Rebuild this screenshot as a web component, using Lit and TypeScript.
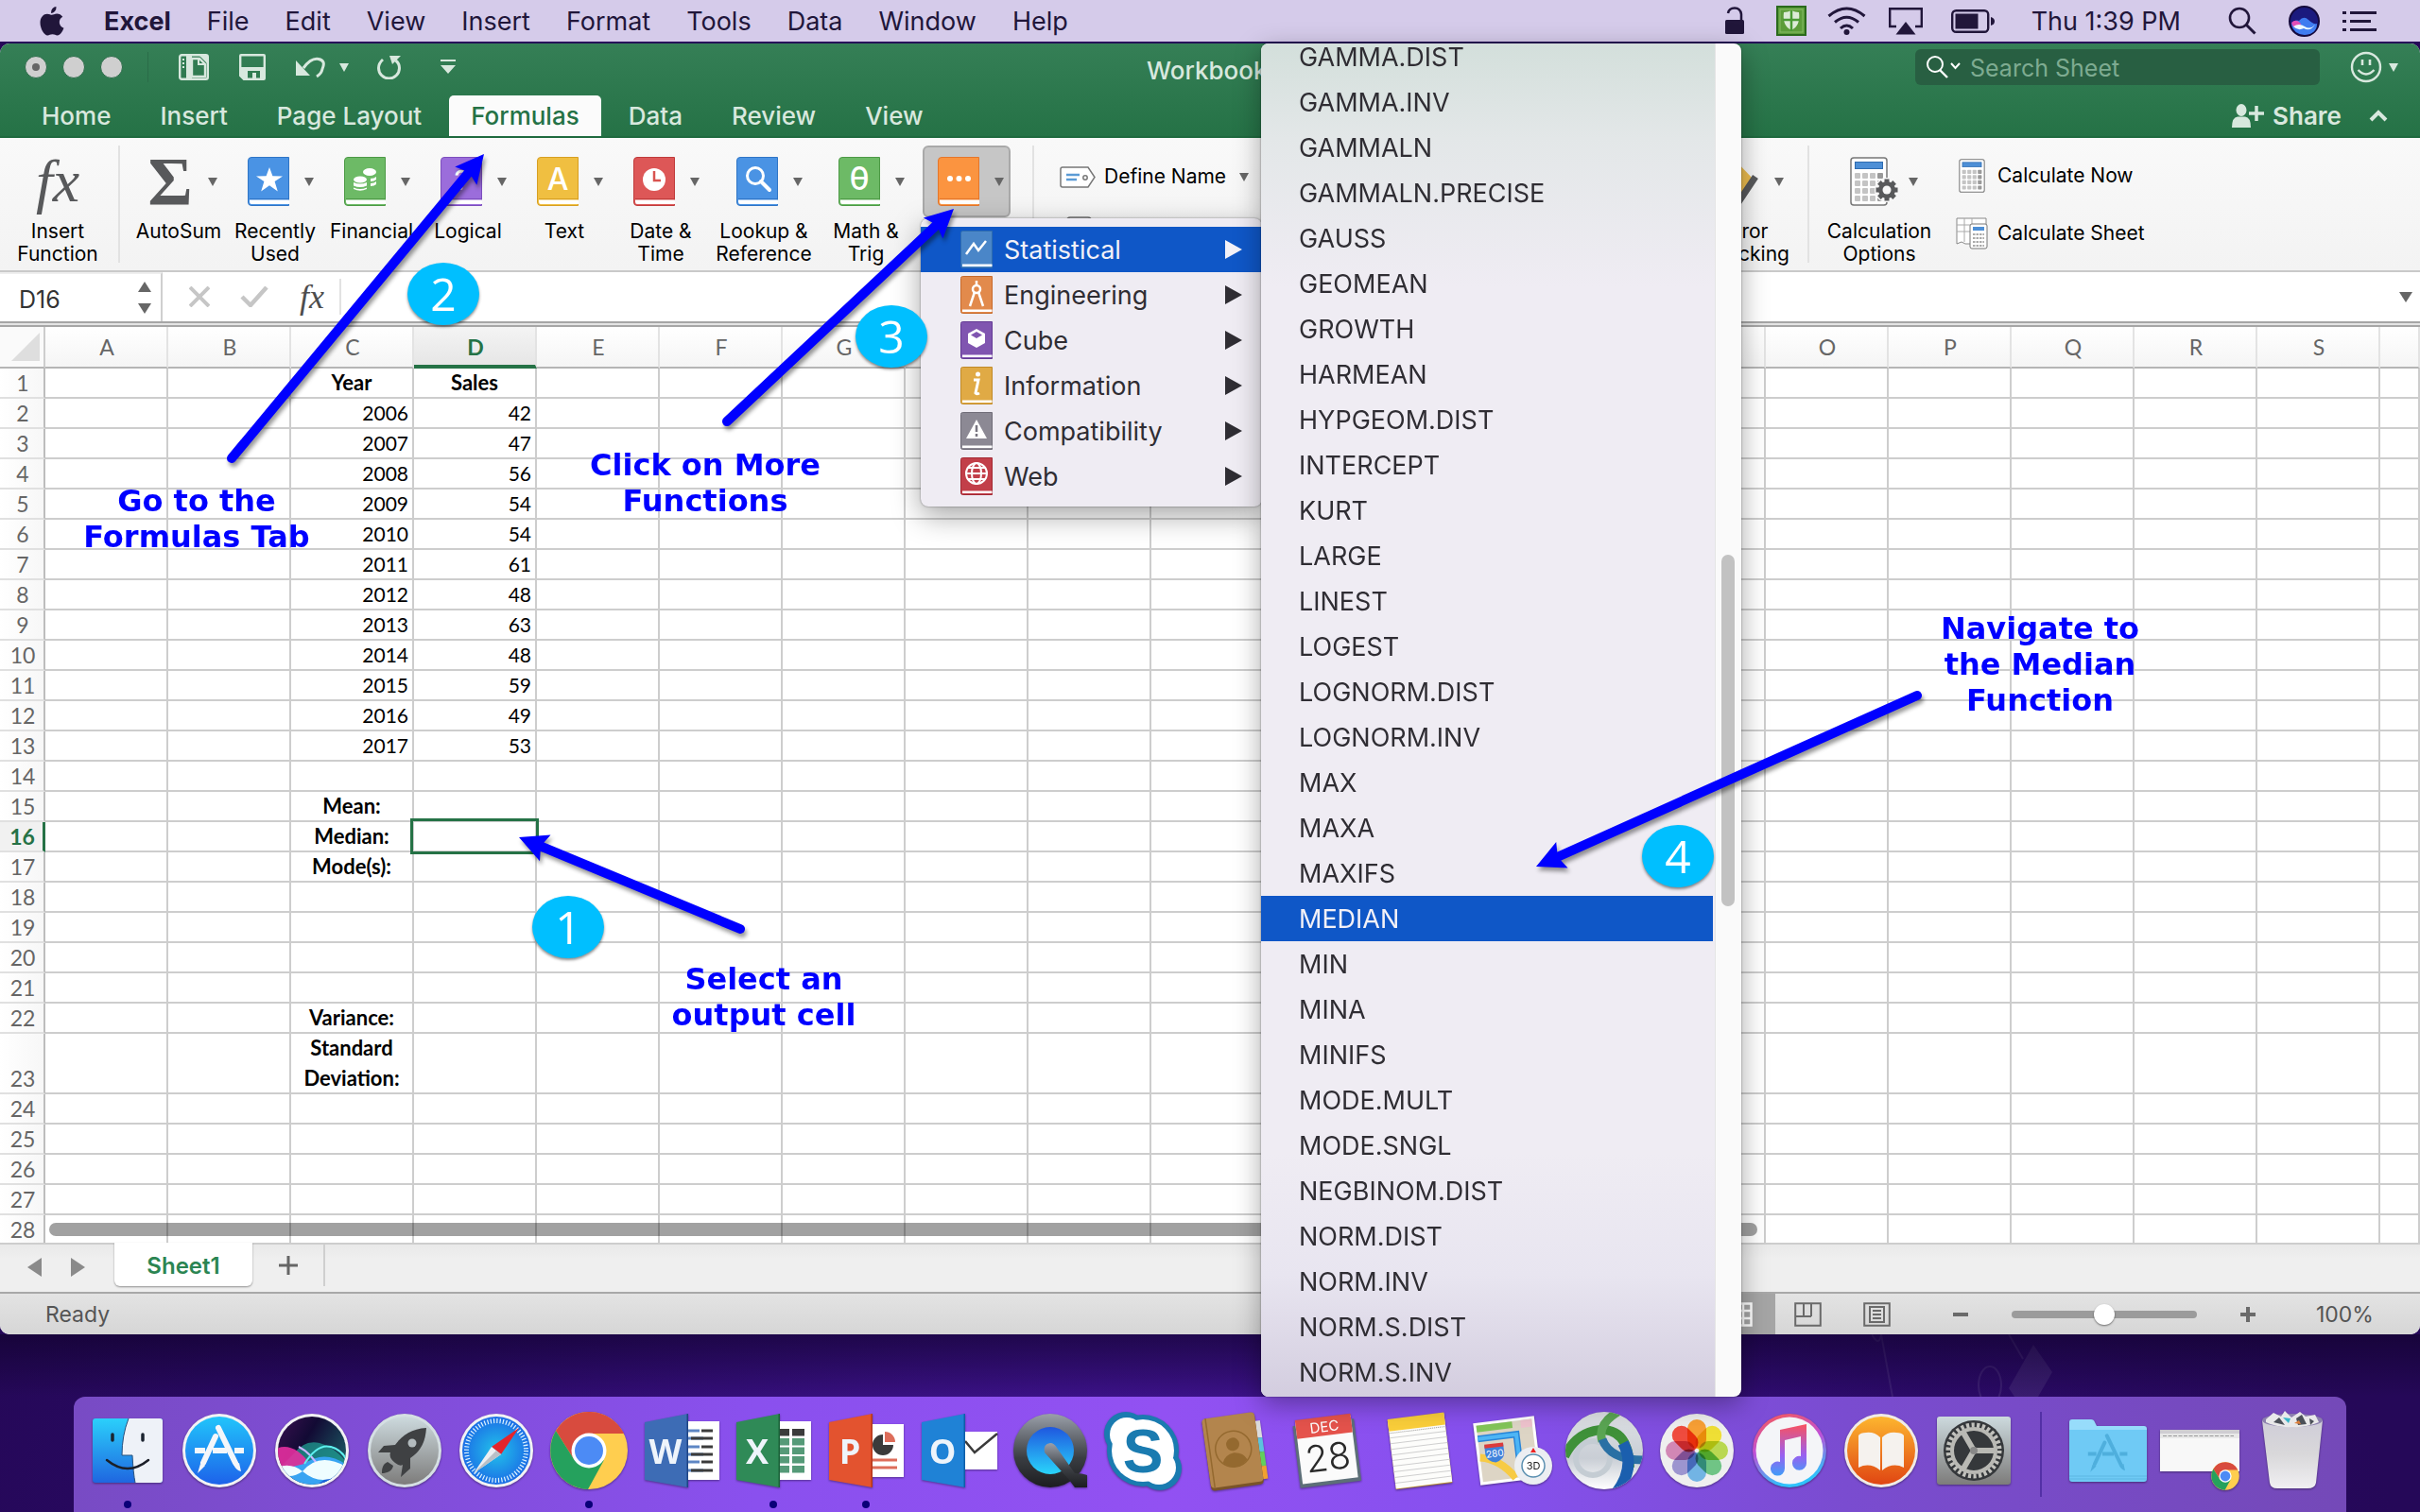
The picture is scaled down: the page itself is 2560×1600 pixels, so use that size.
import { LitElement, html, svg, css, nothing } from "lit";
import { customElement } from "lit/decorators.js";
import { classMap } from "lit/directives/class-map.js";
import { styleMap } from "lit/directives/style-map.js";

const MENUS = ["Excel", "File", "Edit", "View", "Insert", "Format", "Tools", "Data", "Window", "Help"];
const TABS = ["Home", "Insert", "Page Layout", "Formulas", "Data", "Review", "View"];
const COLUMNS = "ABCDEFGHIJKLMNOPQRST".split("");

const CELLS: Record<number, { c?: string; d?: string; head?: boolean }> = {
  1: { c: "Year", d: "Sales", head: true },
  2: { c: "2006", d: "42" },
  3: { c: "2007", d: "47" },
  4: { c: "2008", d: "56" },
  5: { c: "2009", d: "54" },
  6: { c: "2010", d: "54" },
  7: { c: "2011", d: "61" },
  8: { c: "2012", d: "48" },
  9: { c: "2013", d: "63" },
  10: { c: "2014", d: "48" },
  11: { c: "2015", d: "59" },
  12: { c: "2016", d: "49" },
  13: { c: "2017", d: "53" },
  15: { c: "Mean:", head: true },
  16: { c: "Median:", head: true },
  17: { c: "Mode(s):", head: true },
  22: { c: "Variance:", head: true },
  23: { c: "Standard Deviation:", head: true },
};

const FUNCTIONS = [
  "GAMMA.DIST", "GAMMA.INV", "GAMMALN", "GAMMALN.PRECISE", "GAUSS", "GEOMEAN", "GROWTH", "HARMEAN",
  "HYPGEOM.DIST", "INTERCEPT", "KURT", "LARGE", "LINEST", "LOGEST", "LOGNORM.DIST", "LOGNORM.INV",
  "MAX", "MAXA", "MAXIFS", "MEDIAN", "MIN", "MINA", "MINIFS", "MODE.MULT", "MODE.SNGL",
  "NEGBINOM.DIST", "NORM.DIST", "NORM.INV", "NORM.S.DIST", "NORM.S.INV",
];

/* ---------- ribbon books ---------- */

const book = (fill: string, edge: string, glyph: unknown) => html`
  <svg class="book" viewBox="0 0 44 52" aria-hidden="true">
    <path d="M4 .5H43.500V51.500H4A3.500 3.500 0 0 1 .5 48V4A3.500 3.500 0 0 1 4 .5Z" fill=${fill} stroke=${edge} />
    <path d="M2 45.500H44V50H4Q2 50 2 47.500Z" fill="#fff" />
    <path d="M2 44.500H43" stroke=${edge} />
    ${glyph}
  </svg>`;

const starGlyph = svg`<path d="M23 11l3.400 9.200 10.600.3-8.400 5.600 3.200 10.400L23 30.200l-8.800 6.300 3.200-10.400L9 20.500l10.600-.3z" fill="#fff"/>`;
const coinsGlyph = svg`<g fill="#fff"><ellipse cx="27" cy="16" rx="7" ry="4"/><path d="M28 23q4 0 6-2v3q-2 2-6 2zM28 28q4 0 6-2v3q-2 2-6 2z"/><ellipse cx="17" cy="24" rx="7" ry="3.500"/><path d="M10 27q7 3 14 0v3.500q-7 3-14 0zM10 32.500q7 3 14 0V34q-7 3.500-14 0z"/></g>`;
const letterGlyph = (t: string, size = 28) =>
  svg`<text x="22" y="35" font-size=${size} text-anchor="middle" fill="#fff" font-family="Inter, sans-serif" font-weight="500">${t}</text>`;
const clockGlyph = svg`<circle cx="22" cy="24" r="12" fill="#fff"/><path d="M22 15v10h7" fill="none" stroke="#d9534f" stroke-width="2.500"/>`;
const lensGlyph = svg`<circle cx="20" cy="20" r="8.500" fill="none" stroke="#fff" stroke-width="3"/><path d="M26 26l9 9" stroke="#fff" stroke-width="4" stroke-linecap="round"/>`;
const dotsGlyph = svg`<g fill="#fff"><circle cx="13" cy="23" r="3"/><circle cx="22.500" cy="23" r="3"/><circle cx="32" cy="23" r="3"/></g>`;

const BOOKS = [
  { label: "Recently Used", fill: "#4a93e4", edge: "#2f75c6", glyph: starGlyph, size: "" },
  { label: "Financial", fill: "#6dba66", edge: "#4d9a46", glyph: coinsGlyph, size: "" },
  { label: "Logical", fill: "#9b6ddb", edge: "#7c4ebd", glyph: letterGlyph("?"), size: "" },
  { label: "Text", fill: "#f0bf41", edge: "#d79f22", glyph: letterGlyph("A", 32), size: "" },
  { label: "Date & Time", fill: "#dd5757", edge: "#c03c3c", glyph: clockGlyph, size: "" },
  { label: "Lookup & Reference", fill: "#4a93e4", edge: "#2f75c6", glyph: lensGlyph, size: "wide" },
  { label: "Math & Trig", fill: "#6dba66", edge: "#4d9a46", glyph: letterGlyph("θ", 34), size: "narrow" },
];

const smallBook = (fill: string, edge: string, glyph: unknown) => html`
  <svg class="small-book" viewBox="0 0 34 40" aria-hidden="true">
    <path d="M2.500 .5H33.500V39.500H2.500A2 2 0 0 1 .5 37.500V2.500A2 2 0 0 1 2.500 .5Z" fill=${fill} stroke=${edge} />
    <path d="M2 35.500H33.500V38H2Z" fill="#fff" />
    ${glyph}
  </svg>`;

const CATEGORIES = [
  { name: "Statistical", fill: "#4a86c8", edge: "#2f6cae", glyph: svg`<path d="M6 25l8-11 5 7 8-10" fill="none" stroke="#fff" stroke-width="2.500"/>` },
  { name: "Engineering", fill: "#e28a4c", edge: "#c76a2b", glyph: svg`<g fill="none" stroke="#fff" stroke-width="2.500"><path d="M17 5v5M15 17l-5 15M19 17l5 15"/><circle cx="17" cy="14" r="4"/></g>` },
  { name: "Cube", fill: "#8055b0", edge: "#633a94", glyph: svg`<path d="M17 8l9 5v10l-9 5-9-5V13z" fill="#fff"/><path d="M17 11l6 3.500-6 3.500-6-3.500z" fill="#8055b0"/>` },
  { name: "Information", fill: "#e0aa45", edge: "#c08a28", glyph: svg`<circle cx="18.500" cy="8" r="2.500" fill="#fff"/><path d="M14 14h5l-3 14q1 1.500 4 0" fill="none" stroke="#fff" stroke-width="3"/>` },
  { name: "Compatibility", fill: "#8c8994", edge: "#6f6c77", glyph: svg`<path d="M17 8l11 20H6z" fill="#fff"/><path d="M17 14v7M17 23v3" stroke="#77747f" stroke-width="2.500"/>` },
  { name: "Web", fill: "#c23f49", edge: "#a32a34", glyph: svg`<g fill="none" stroke="#fff" stroke-width="2"><circle cx="17" cy="17" r="11"/><ellipse cx="17" cy="17" rx="5" ry="11"/><path d="M6 17h22M8 11h18M8 23h18"/></g>` },
];

const calculator = (cls: string, gear: boolean) => html`
  <svg class=${cls} viewBox=${gear ? "0 0 52 52" : "0 0 40 52"} aria-hidden="true">
    <rect x="1" y="1" width="38" height="50" rx="3" fill="#fff" stroke="#777" stroke-width="1.500" />
    <rect x="5.500" y="5.500" width="29" height="7" fill="#4d8fd6" stroke="#2f6cb0" />
    ${[0, 1, 2, 3].map((r) => [0, 1, 2, 3].map((c) => svg`<rect x=${5 + c * 8} y=${17 + r * 8} width="6" height="6" rx="1" fill=${c === 3 ? "#9a9a9a" : "#c4c4c4"}/>`))}
    ${gear
      ? svg`<circle cx="39" cy="35" r="13" fill="#f7f7f7"/><g fill="#58595b"><circle cx="39" cy="35" r="9"/>${[0, 45, 90, 135].map((a) => svg`<rect x="36.500" y="23.500" width="5" height="23" transform="rotate(${a} 39 35)"/>`)}</g><circle cx="39" cy="35" r="4.500" fill="#f7f7f7"/>`
      : nothing}
  </svg>`;

const fxGlyph = (cls: string) => html`<span class=${cls} aria-hidden="true">fx</span>`;
const caret = html`<svg class="caret" width="12" height="9" viewBox="0 0 12 9" aria-hidden="true"><path d="M1 0h10L6 9z" fill="currentColor" /></svg>`;

/* ---------- dock ---------- */

const office = (base: string, dark: string, letter: string, paper: unknown) => svg`
  ${paper}
  <path d="M3 12L49 3V81L3 73Z" fill=${base}/><path d="M47.500 3.300L49 3V81L47.500 80.700Z" fill=${dark}/>
  <text x="25" y="56" font-size="36" text-anchor="middle" fill="#eef4fb" font-family="Open Sans, sans-serif" font-weight="700">${letter}</text>`;

const chrome = (x: number, y: number, k: number) => svg`
  <g transform="translate(${x} ${y}) scale(${k})">
    <circle r="41" fill="#ffce4f"/>
    <path d="M0-18H37A41 41 0 0 0-35-21L-16 9Z" fill="#d84b3e"/>
    <path d="M-35-21A41 41 0 0 0-1 41L16 10L0 18L-16 9Z" fill="#25a15d"/>
    <circle r="18.500" fill="#fff"/><circle r="15" fill="#4c8bf5"/>
  </g>`;

const brushes = (c: string, w: number) => svg`
  <g stroke=${c} stroke-width=${w} stroke-linecap="round" fill="none"><path d="M38 27L25 55M41 18L59 55" /><path d="M16 42H27M35 42H50M58 42H68" stroke-linecap="butt"/></g>
  <path d="M22 56l5 2-8 8zM57 57l6-2 2 9q-5-1-8-7z" fill=${c}/>`;

const DOCK: { name: string; running?: boolean; art: unknown }[] = [
  {
    name: "Finder", running: true,
    art: svg`<rect x="5" y="8" width="74" height="68" rx="3" fill="url(#finderBlue)"/>
      <path d="M43 8H76a3 3 0 0 1 3 3V73a3 3 0 0 1-3 3H50Q48 66 47 47H36Q36 26 43 8Z" fill="#eef2f8"/>
      <path d="M43 8Q36 26 36 47H47Q48 66 50 76" fill="none" stroke="#27527d"/>
      <path d="M26 25v6M58 25v6" stroke="#1b2430" stroke-width="3.500" stroke-linecap="round"/>
      <path d="M20 52Q42 70 64 52" fill="none" stroke="#1b1f28" stroke-width="2.500" stroke-linecap="round"/>`,
  },
  { name: "App Store", art: svg`<circle cx="42" cy="42" r="39" fill="#f2f2f4"/><circle cx="42" cy="42" r="36" fill="url(#storeBlue)"/>${brushes("#f4f6fa", 6)}` },
  {
    name: "Siri",
    art: svg`<circle cx="42" cy="42" r="39" fill="#f2f2f4"/><circle cx="42" cy="42" r="36" fill="url(#siriDark)"/>
      <g clip-path="url(#disc36)"><path d="M22 46Q34 30 50 34T80 56V64H4Z" fill="#1fa597" opacity=".7"/><path d="M4 40Q22 32 40 56L32 64L4 60Z" fill="#e62fa0" opacity=".9"/>
      <path d="M4 62Q20 60 34 56Q56 40 80 58V84H4Z" fill="#38a4f2"/><path d="M4 68Q30 74 44 84H4Z" fill="#6f7cf0"/><path d="M40 84Q60 66 80 66V84Z" fill="#1c60d8"/>
      <path d="M28 38Q40 44 50 60" fill="none" stroke="#c9b6ff" stroke-width="2"/><path d="M34 56Q48 34 62 38T80 56" fill="none" stroke="#5ef0ee" stroke-width="2"/>
      <path d="M4 60Q20 54 32 64Q50 42 80 60Q56 84 32 64Q18 74 4 64Z" fill="#effdff"/></g>`,
  },
  {
    name: "Launchpad",
    art: svg`<circle cx="42" cy="42" r="39" fill="#d5dfe3"/><circle cx="42" cy="42" r="36" fill="url(#steel)"/>
      <path d="M65 18C50 19 40 25 32 36L20 37L14 44L27 44Q25 50 32 55Q37 59 40 57L38 70L48 61L48 50C60 42 64 32 65 18Z" fill="#3f4143"/>
      <circle cx="50" cy="34" r="4.500" fill="#b3bbbe"/><path d="M24 54C18 57 18 62 18 66C23 66 29 64 30 58Z" fill="#3f4143"/>`,
  },
  {
    name: "Safari",
    art: svg`<circle cx="42" cy="42" r="39" fill="#f2f2f4"/><circle cx="42" cy="42" r="36" fill="url(#safariBlue)"/>
      <circle cx="42" cy="42" r="31.500" fill="none" stroke="#dff3ff" stroke-width="5" stroke-dasharray="1.200 2.100"/>
      <path d="M66 18L37 38L47 46Z" fill="#e3242b"/><path d="M18 66L37 38L47 46Z" fill="#eceff2"/><path d="M18 66L42 42L47 46Z" fill="#b9c0c7"/>`,
  },
  { name: "Chrome", running: true, art: chrome(42, 42, 1) },
  {
    name: "Word",
    art: office("#3d6cb5", "#1e4486", "W", svg`<rect x="40" y="11" width="42" height="62" fill="#fff"/>${[21, 29, 38, 46, 54, 63].map((y, i) => svg`<path d="M49 ${y}H${i % 2 ? 65 : 61}" stroke="#5d86c4" stroke-width="3"/><path d="M${i % 2 ? 52 : 63} ${y}H75" stroke="#3b3b3b" stroke-width="3"/>`)}`),
  },
  {
    name: "Excel", running: true,
    art: office("#2f8a57", "#1b6139", "X", svg`<rect x="40" y="11" width="42" height="62" fill="#fff"/>${[19, 29, 38.5, 48, 58].map((y, i) => svg`<path d="M49 ${y}h10v7.500h-10zM62 ${y}h13v7.500h-13z" fill=${i ? "#559a78" : "#3b3b3b"}/>`)}`),
  },
  {
    name: "PowerPoint", running: true,
    art: office("#e3532f", "#b5361a", "P", svg`<rect x="40" y="14" width="42" height="56" fill="#fff"/><path d="M60 25A11 11 0 1 0 71 36H60Z" fill="#3b3b3b"/><path d="M62 22A11 11 0 0 1 73 33H62Z" fill="#dd6d5a"/><path d="M49 52H75M49 60H75" stroke="#dd6d5a" stroke-width="3"/>`),
  },
  {
    name: "Outlook",
    art: office("#1f82d6", "#0f5ea8", "O", svg`<rect x="44" y="22" width="39" height="40" fill="#fff"/><path d="M49 32L59 44L83 24" fill="none" stroke="#3b3b3b" stroke-width="2.500"/>`),
  },
  {
    name: "QuickTime Player",
    art: svg`<circle cx="42" cy="42" r="39" fill="url(#qtRing)"/><circle cx="42" cy="42" r="25" fill="url(#qtBlue)"/>
      <path d="M36 44Q34 35 42 34Q46 34 49 39L68 66Q76 66 81 68V81H68L62 73Z" fill="url(#qtRing)"/>`,
  },
  {
    name: "Skype",
    art: svg`<g fill="#1a7bb0"><circle cx="24" cy="24" r="23"/><circle cx="60" cy="61" r="23"/><circle cx="42" cy="42" r="38"/></g>
      <g fill="#fff"><circle cx="25" cy="25" r="18"/><circle cx="59" cy="60" r="18"/><circle cx="42" cy="42" r="33"/></g>
      <text x="42" y="65" font-size="64" text-anchor="middle" fill="#1a7bb0" font-family="Liberation Sans, sans-serif" font-weight="700">S</text>`,
  },
  {
    name: "Contacts",
    art: svg`<g transform="rotate(-8 42 42)"><rect x="62" y="14" width="10" height="18" fill="#dcdcdc"/><rect x="62" y="32" width="10" height="15" fill="#5cc3dd"/><rect x="62" y="47" width="10" height="15" fill="#62cf5f"/><rect x="62" y="62" width="10" height="14" fill="#f0a030"/>
      <rect x="11" y="5" width="56" height="76" rx="4" fill="#7a5428"/><rect x="11" y="4" width="56" height="74" rx="4" fill="#b3854d"/><path d="M15 4V78" stroke="#94692f" stroke-width="1.500"/>
      <circle cx="40" cy="40" r="19" fill="none" stroke="#94692f" stroke-width="1.500"/><circle cx="40" cy="35" r="7" fill="#94692f"/><path d="M27 53Q30 45 40 44Q50 45 53 53Q47 59 40 59Q33 59 27 53Z" fill="#94692f"/></g>`,
  },
  {
    name: "Calendar",
    art: svg`<g transform="rotate(-7 42 42)"><rect x="9" y="12" width="65" height="66" fill="#5d6f78"/><rect x="12" y="8" width="59" height="66" fill="#fbfbfb"/><rect x="12" y="6" width="59" height="20" fill="#e5534c"/>
      <text x="42" y="22" font-size="15" text-anchor="middle" fill="#fff" font-family="Inter, sans-serif">DEC</text>
      <text x="42" y="63" font-size="39" text-anchor="middle" fill="#2a2a2a" font-family="Inter, sans-serif" font-weight="300">28</text></g>`,
  },
  {
    name: "Notes",
    art: svg`<g transform="rotate(-7 42 42)"><rect x="12" y="6" width="60" height="74" fill="#b88d2a"/><rect x="12" y="6" width="60" height="73" fill="#fdfdfb"/><rect x="12" y="5" width="60" height="13" fill="#fbcf3a"/>
      ${[25, 31, 37, 43, 49, 55, 61, 67, 73].map((y) => svg`<path d="M12 ${y}H72" stroke="#cfcfcf"/>`)}<path d="M12 20H72" stroke="#999" stroke-dasharray="1 1"/></g>`,
  },
  {
    name: "Maps",
    art: svg`<g transform="rotate(-7 36 42)"><rect x="4" y="9" width="65" height="66" fill="#fff"/><rect x="7" y="12" width="59" height="60" fill="#ddd5c5"/><rect x="7" y="12" width="38" height="7" fill="#83c559"/><rect x="54" y="12" width="12" height="8" fill="#efc3ce"/>
      <path d="M7 26H48V60" fill="none" stroke="#2a86d8" stroke-width="7"/><path d="M7 26H48V60" fill="none" stroke="#4db5f5" stroke-width="4"/><path d="M7 46Q28 50 42 72" fill="none" stroke="#f7cb45" stroke-width="8"/>
      <path d="M13 34H33V44Q32 51 23 53Q14 51 13 44Z" fill="#3f82dc"/><path d="M13 33H33V37H13Z" fill="#dc3b3b"/><text x="23" y="47" font-size="10" text-anchor="middle" fill="#fff" font-family="Inter, sans-serif">280</text></g>
      <circle cx="64" cy="58" r="20" fill="#eceef2"/><circle cx="64" cy="58" r="12" fill="#fff" stroke="#5a8fb0" stroke-width="1.500"/><path d="M61 44l3-5 3 5z" fill="#e22"/><text x="64" y="62" font-size="11" text-anchor="middle" fill="#222" font-family="Inter, sans-serif">3D</text>`,
  },
  {
    name: "AnyConnect",
    art: svg`<circle cx="42" cy="42" r="41" fill="url(#orb)"/><g clip-path="url(#disc41)"><g fill="none" stroke="#c4ccd3" stroke-width="6"><circle cx="30" cy="50" r="18"/></g>
      <path d="M0 48Q14 20 42 20Q68 22 69 60" fill="none" stroke="#3f9139" stroke-width="10"/>
      <path d="M58 0Q34 14 40 32" fill="none" stroke="#5aa553" stroke-width="9"/>
      <path d="M40 30Q48 52 84 52" fill="none" stroke="#2a70a4" stroke-width="9"/><path d="M62 34Q76 60 54 88" fill="none" stroke="#1b5fae" stroke-width="12"/></g>`,
  },
  {
    name: "Photos",
    art: svg`<circle cx="42" cy="42" r="39" fill="#efefef"/><g class="petals">${["#f8a035", "#efdf35", "#b9d851", "#70c485", "#72b4e4", "#9c95cf", "#d287b5", "#ef4c3e"].map((c, i) => svg`<rect x="32" y="9" width="20" height="31" rx="10" fill=${c} transform="rotate(${i * 45} 42 42)"/>`)}</g>`,
  },
  {
    name: "iTunes",
    art: svg`<circle cx="42" cy="42" r="39" fill="url(#tunesRing)"/><circle cx="42" cy="42" r="35.500" fill="#f4f5f8"/>
      <path d="M32 20L60 14V55A7.500 7.500 0 1 1 54 48V27L37 31V61A7.500 7.500 0 1 1 32 54Z" fill="url(#tunesNote)"/>`,
  },
  {
    name: "iBooks",
    art: svg`<circle cx="42" cy="42" r="39" fill="#f0ebe6"/><circle cx="42" cy="42" r="36" fill="url(#booksOrange)"/>
      <path d="M41 28Q35 22 26 23Q20 23 18 26V60Q30 54 41 63ZM43 28Q49 22 58 23Q64 23 66 26V60Q54 54 43 63Z" fill="#f5f2ee"/>`,
  },
  {
    name: "System Preferences",
    art: svg`<rect x="3" y="6" width="78" height="72" rx="3" fill="url(#steel)"/><circle cx="42" cy="42" r="32" fill="#35383b"/>
      <circle cx="42" cy="42" r="27" fill="none" stroke="#c2c2bd" stroke-width="5" stroke-dasharray="3.200 2.450"/><circle cx="42" cy="42" r="23" fill="none" stroke="#b9b9b4" stroke-width="4"/>
      <g stroke="#b9b9b4" stroke-width="6"><path d="M42 42H64M42 42L31 23M42 42L31 61"/></g><circle cx="42" cy="42" r="4" fill="#888"/>`,
  },
];

const DOCK_RIGHT = [
  {
    name: "Applications",
    art: svg`<path d="M1 12a3 3 0 0 1 3-3H24q3 0 4 3l2 4H80a3 3 0 0 1 3 3V40H1Z" fill="#97dcfb"/><path d="M1 20H83V72a3 3 0 0 1-3 3H4a3 3 0 0 1-3-3Z" fill="#6fcaf5"/><path d="M1 69H83M1 72H83" stroke="#5cb6e2"/>
      <g transform="translate(8 12) scale(.8)">${brushes("#4fafdd", 5)}</g>`,
  },
  {
    name: "Browser window",
    art: svg`<rect x="0" y="20" width="84" height="44" fill="#f8f8f8"/><rect x="0" y="20" width="84" height="4" fill="#cfcdd2"/><rect x="0" y="24" width="84" height="5" fill="#e8e8e8"/><path d="M3 26.500H78" stroke="#999" stroke-dasharray="4 1.500"/>${chrome(69, 69, 0.36)}`,
  },
  {
    name: "Trash",
    art: svg`<path d="M10 10Q42 20 74 10L67 76Q66 82 58 82H26Q19 82 18 76Z" fill="url(#bin)"/><ellipse cx="42" cy="10" rx="32" ry="7" fill="#8c80ae"/>
      <path d="M14 9L22 2L30 6L34 0L41 7L50 1L56 6L66 4L70 12Q56 18 42 17Q26 18 14 12Z" fill="#e9e9ea"/><path d="M22 12l6-5 6 8zM46 8l6-4 5 10-9 1zM60 8l5 3-4 4z" fill="#4b5058"/><path d="M32 7l8 1-2 5z" fill="#36b5c9"/><path d="M44 13l5-3 2 4z" fill="#dd7f3a"/>`,
  },
];

/* ---------- walkthrough annotations ---------- */

const ARROWS = [
  { from: [783, 983], to: [549, 886] },
  { from: [245, 485], to: [512, 163] },
  { from: [769, 446], to: [1009, 221] },
  { from: [2028, 736], to: [1625, 917] },
];
const STEPS = [
  { n: 1, x: 601, y: 981 },
  { n: 2, x: 469, y: 311 },
  { n: 3, x: 943, y: 356 },
  { n: 4, x: 1775, y: 906 },
];
const NOTES = [
  { x: 208, y: 511, lines: ["Go to the", "Formulas Tab"] },
  { x: 746, y: 473, lines: ["Click on More", "Functions"] },
  { x: 808, y: 1017, lines: ["Select an", "output cell"] },
  { x: 2158, y: 646, lines: ["Navigate to", "the Median", "Function"] },
];

const arrow = ({ from, to }: { from: number[]; to: number[] }) => {
  const dx = to[0] - from[0];
  const dy = to[1] - from[1];
  const len = Math.hypot(dx, dy);
  const ux = dx / len;
  const uy = dy / len;
  const at = (back: number, side: number) =>
    `${(to[0] - ux * back - uy * side).toFixed(1)} ${(to[1] - uy * back + ux * side).toFixed(1)}`;
  return svg`<path d="M${from[0]} ${from[1]}L${at(22, 0)}" stroke="#00f" stroke-width="10" stroke-linecap="round"/>
    <path d="M${at(0, 0)}L${at(30, 15)}L${at(25, 0)}L${at(30, -15)}Z" fill="#00f"/>`;
};

@customElement("app-root")
export class AppRoot extends LitElement {
  static styles = css`
    :host { display: block; font-family: Inter, "Liberation Sans", sans-serif; color: #000; }
    * { box-sizing: border-box; }
    button, input { font: inherit; color: inherit; border: 0; padding: 0; margin: 0; background: none; border-radius: 0; outline: none; }
    button { display: flex; align-items: center; white-space: nowrap; }
    svg { display: block; flex: none; }

    .desktop {
      position: relative; display: flex; flex-direction: column; height: 100vh; overflow: hidden;
      background: radial-gradient(1300px 500px at 48% 100%, #45169a, #2b0a68 65%, #250858);
    }
    .wallpaper { position: absolute; right: 380px; bottom: 122px; width: 200px; height: 66px; }

    .menubar { display: flex; align-items: center; height: 44px; margin-bottom: 2px; padding: 0 46px 0 42px; background: #d5cbea; color: #21163a; font-size: 27px; flex: none; position: relative; }
    .menubar nav { display: flex; gap: 38px; margin-left: 42px; }
    .menubar .app { font-weight: 700; }
    .tray { display: flex; align-items: center; margin-left: auto; }
    .tray .lock { margin-right: 34px; }
    .tray .shield { margin-right: 22px; }
    .tray .wifi { margin-right: 24px; }
    .tray .airplay { margin-right: 30px; }
    .tray .battery { margin-right: 38px; }
    .tray .find { margin: 0 34px 0 50px; }
    .tray .assistant { margin-right: 24px; }

    .window { position: relative; flex: 1; min-height: 0; display: flex; flex-direction: column; margin-bottom: 66px; border-radius: 10px; overflow: hidden; background: #fff; }
    .shade { flex: none; position: absolute; left: 0; right: 0; bottom: 122px; height: 66px; background: linear-gradient(rgba(10, 0, 30, .5), rgba(10, 0, 30, 0)); }

    .chrome { flex: none; background: linear-gradient(#357f56, #257246); border-bottom: 2px solid #1f6a3f; height: 100px; display: flex; flex-direction: column; color: #d8e8de; }
    .titlebar { display: flex; align-items: center; height: 56px; padding: 0 22px 4px 26px; position: relative; }
    .lights { display: flex; gap: 16px; padding-right: 26px; border-right: 1px solid #2a6c48; height: 32px; align-items: center; }
    .light { width: 24px; height: 24px; border-radius: 12px; background: #cfcfcf; border: 1px solid #2a6b48; justify-content: center; }
    .light.dirty::after { content: ""; width: 8px; height: 8px; border-radius: 4px; background: #666; }
    .quick { display: flex; align-items: center; margin-left: 32px; }
    .quick .save { margin-left: 32px; }
    .quick .undo { margin-left: 32px; }
    .quick .caret { margin-left: 14px; }
    .quick .redo { margin-left: 29px; }
    .quick .more { margin-left: 41px; }
    .doc-title { position: absolute; left: 1213px; top: 13px; font-size: 26px; font-weight: 500; line-height: 32px; }
    .search { display: flex; align-items: center; margin-left: auto; width: 428px; height: 38px; border-radius: 6px; background: #285f42; padding-left: 12px; gap: 10px; }
    .search input { flex: 1; min-width: 0; font-size: 25px; height: 38px; padding-top: 2px; }
    .search input::placeholder { color: #7eab91; opacity: 1; }
    .smile { margin-left: 32px; gap: 6px; }

    .tabs { display: flex; align-items: stretch; height: 44px; padding: 0 34px 0 21px; gap: 6px; }
    .tab { padding: 0 23px; font-size: 26px; font-weight: 500; }
    .tab.active { background: #fbfbfb; color: #257246; border-radius: 5px 5px 0 0; }
    .share { margin-left: auto; gap: 9px; font-size: 26px; font-weight: 600; }
    .collapse { margin-left: 23px; }

    .ribbon { flex: none; display: flex; align-items: flex-start; height: 142px; background: linear-gradient(#f9f9f9, #f3f3f3); border-bottom: 2px solid #c9c9c9; font-size: 21px; line-height: 24px; }
    .ribbon .caret, .formula .caret { color: #666; }
    .tool { flex-direction: column; gap: 15px; width: 102px; padding-top: 20px; white-space: normal; text-align: center; flex: none; }
    .tool.wide { width: 116px; }
    .tool.narrow { width: 100px; }
    .tool.first { width: 122px; }
    .tool .art { display: flex; align-items: center; gap: 15px; width: 84px; height: 52px; padding-left: 13px; }
    .tool.first .art { padding-left: 19px; }
    .tool .label { width: 90px; display: flex; justify-content: center; }
    .tool.wide .label { width: 104px; }
    .tool.calc .label { width: 120px; }
    .tool.calc .art { gap: 9px; padding-left: 11px; }
    .book { width: 44px; height: 52px; }
    .calc-big { width: 52px; height: 52px; }
    .sigma { width: 44px; height: 52px; overflow: visible; }
    .fx-big { font: italic 64px/52px "Liberation Serif", serif; color: #58595b; }
    .rule { width: 2px; height: 124px; margin-top: 8px; background: #e2e2e2; flex: none; }
    .rule.a { margin-left: 3px; margin-right: 11px; }
    .rule.b { margin-left: 23px; margin-right: 27px; }
    .rule.c { margin-left: 15px; margin-right: 23px; }
    .pressed { width: 93px; height: 76px; margin: 8px 0 0 10px; padding: 0 0 0 14px; gap: 15px; background: #c6c6c6; border: 2px solid #a9a9a9; border-radius: 6px; flex: none; }
    .stack { display: flex; flex-direction: column; gap: 24px; padding-top: 23px; }
    .stack button { height: 36px; gap: 9px; }
    .stack.names { width: 674px; flex: none; }
    .stack.names .caret { margin-left: 4px; }
    .stack.calcs { margin-left: 30px; padding-top: 22px; gap: 25px; }
    .stack.calcs button { gap: 10px; }
    .calc-small { width: 34px; height: 36px; }

    .formula { flex: none; display: flex; align-items: center; height: 52px; background: #fff; padding-right: 8px; }
    .namebox { display: flex; align-items: center; width: 172px; height: 52px; padding: 0 10px 0 20px; border-right: 2px solid #cfcfcf; border-top: 2px solid #eee; }
    .namebox input { width: 100px; font-size: 25px; color: #333; padding-top: 3px; }
    .stepper { margin-left: auto; flex-direction: column; gap: 12px; color: #666; }
    .formula .cancel { margin-left: 28px; }
    .formula .accept { margin-left: 32px; }
    .fx-small { font: italic 36px/40px "Liberation Serif", serif; color: #4d4d4d; margin-left: 33px; }
    .formula .entry { flex: 1; height: 38px; margin: 0 12px 0 16px; border-left: 2px solid #e2e2e2; font-size: 25px; }
    .split { flex: none; height: 6px; border-top: 2px solid #a6a6a6; border-bottom: 2px solid #a6a6a6; background: #e4e4e4; }

    .sheet { position: relative; flex: 1; min-height: 0; overflow: hidden; }
    table { width: 100%; table-layout: fixed; border-collapse: separate; border-spacing: 0; font-family: Lato, "Liberation Sans", sans-serif; font-size: 21px; line-height: 30px; }
    col.gutter { width: 48px; }
    col.std { width: 130px; }
    th, td { padding: 0; font-weight: 400; height: 32px; }
    td { border-right: 2px solid #cdcdcd; border-bottom: 2px solid #cdcdcd; text-align: right; padding-right: 4px; vertical-align: bottom; }
    thead th { height: 44px; color: #666; font-size: 23px; background: linear-gradient(#fff, #f5f5f5); border-right: 2px solid #e3e3e3; border-bottom: 2px solid #b5b5b5; padding-left: 2px; }
    thead th.sel { color: #257246; font-weight: 700; background: linear-gradient(#f4f4f4, #e6e6e6); border-bottom: 4px solid #257246; padding-top: 2px; }
    thead th.corner { border-right: 2px solid #cdcdcd; background: #fafafa; padding: 0; }
    tbody th { color: #666; font-size: 23px; background: linear-gradient(90deg, #fff, #f7f7f7); border-right: 2px solid #bdbdbd; border-bottom: 2px solid #e0e0e0; vertical-align: bottom; text-align: center; padding-left: 2px; }
    tbody th.sel { color: #257246; font-weight: 700; border-right: 3px solid #257246; background: #f1f1f1; }
    td.head { text-align: center; font-size: 22px; font-weight: 700; padding: 0 8px; line-height: 32px; height: 32px; }
    td.head .in { display: block; margin-bottom: -1px; margin-top: -1px; }
    td.picked { position: relative; }
    td.picked::after { content: ""; position: absolute; inset: -4px -4px -4px -4px; border: 3px solid #257246; }
    .corner-mark { width: 30px; height: 30px; margin-left: 12px; }
    .hscroll { position: absolute; left: 52px; bottom: 7px; width: 1807px; height: 14px; border-radius: 7px; background: rgba(0, 0, 0, .37); }

    .sheettabs { flex: none; display: flex; height: 52px; background: linear-gradient(#e9e9e9, #efefef 30%); padding-left: 29px; position: relative; align-items: flex-start; border-top: 2px solid #cdcdcd; }
    .sheettabs .nav { height: 48px; color: #8a8a8a; margin-right: 31px; }
    .sheettab { margin-top: -2px; height: 46px; width: 146px; padding-top: 2px; justify-content: center; background: #fff; color: #2b8552; font-size: 24px; font-weight: 600; border-radius: 0 0 6px 6px; box-shadow: 0 1px 2px rgba(0, 0, 0, .4); }
    .add { width: 77px; justify-content: center; color: #666; border-right: 2px solid #cfcfcf; height: 44px; }
    .status { flex: none; display: flex; align-items: center; height: 45px; border-top: 2px solid #a8a8a8; background: linear-gradient(#e3e3e3, #d6d6d6); color: #555; font-size: 23px; padding: 0 48px; }
    .views { display: flex; align-items: center; margin-left: auto; height: 43px; }
    .views .on { background: #a5a5a5; height: 43px; width: 76px; justify-content: center; margin-right: 20px; }
    .views .page { margin-right: 44px; }
    .zoom { display: flex; align-items: center; margin-left: 66px; }
    .zoom input { appearance: none; width: 196px; height: 22px; margin: 0 46px; }
    .zoom input::-webkit-slider-runnable-track { height: 8px; border-radius: 4px; background: #9b9b9b; }
    .zoom input::-webkit-slider-thumb { appearance: none; width: 22px; height: 22px; margin-top: -7px; border-radius: 11px; background: #fff; box-shadow: 0 1px 2px rgba(0, 0, 0, .5); }
    .zoom output { width: 62px; margin-left: 64px; }

    .popup { position: absolute; left: 974px; top: 231px; width: 361px; padding: 9px 0 8px; background: #efecf3; border-radius: 8px; box-shadow: 0 0 2px rgba(0, 0, 0, .5), 0 10px 30px rgba(0, 0, 0, .35); font-size: 27px; color: #2f2d33; }
    .popup button { width: 100%; height: 48px; padding: 0 21px 0 42px; gap: 12px; }
    .popup .on, .functions .on { background: #0f57c7; color: #f3f1f7; }
    .popup .go { margin-left: auto; }
    .small-book { width: 34px; height: 40px; }
    .flyout { position: absolute; left: 1334px; top: 46px; bottom: 122px; width: 508px; display: flex; overflow: hidden; border-radius: 8px; background: #fafafa; font-size: 27px; color: #2f2d33; }
    .flyout-shadow { position: absolute; left: 1334px; top: 46px; bottom: 122px; width: 508px; border-radius: 8px; box-shadow: 0 0 2px rgba(0, 0, 0, .5), 0 8px 28px rgba(0, 0, 0, .35); }
    .functions { flex: 1; background: linear-gradient(#d3dfdb, #e3e7e8 7%, #efecf3 18%, #efecf3 82%, #e8e5f0 91%, #d3cddf); }
    .functions button { width: 478px; height: 48px; padding-left: 40px; }
    .functions button:first-child { margin-top: -10px; }
    .track { width: 28px; border-left: 1px solid #e5e5e5; padding: 541px 0 0 6px; }
    .knob { width: 14px; height: 372px; border-radius: 7px; background: #c2c2c2; }

    .dock { position: relative; flex: none; display: grid; grid-template-columns: repeat(21, 1fr) 44px repeat(3, 1fr); height: 122px; margin: 0 78px; padding: 15px 8px 0; border-radius: 12px 12px 0 0; background: linear-gradient(90deg, #784bc4, #8a50ee 30%, #9251f2 48%, #8650ee 62%, #7a4cd0 78%, #7449b8); }
    .dock button { flex-direction: column; gap: 11px; width: 100%; }
    .dock .icon { width: 84px; height: 84px; overflow: visible; filter: drop-shadow(0 1px 1px rgba(0, 0, 0, .4)); }
    .dock .dot { width: 8px; height: 8px; border-radius: 4px; background: #0a0078; }
    .dock .line { width: 2px; height: 90px; margin: 1px auto 0; background: #5330a6; }
    .petals rect { mix-blend-mode: multiply; }
    .petals { isolation: isolate; }
    .defs { position: absolute; width: 0; height: 0; }

    .guide { position: absolute; inset: 0; pointer-events: none; }
    .arrows { position: absolute; left: 0; top: 0; width: 2560px; height: 1600px; filter: drop-shadow(2px 4px 2px rgba(0, 0, 0, .4)); }
    .note { position: absolute; width: 320px; margin-left: -160px; text-align: center; color: #00f; font: 700 32px/38px "DejaVu Sans", sans-serif; }
    .note span { display: block; }
    .step { position: absolute; width: 76px; height: 66px; margin: -33px 0 0 -38px; border-radius: 50%; background: #00bfff; color: #fff; display: flex; align-items: center; justify-content: center; font: 400 48px/66px "Open Sans", sans-serif; box-shadow: 0 2px 3px rgba(0, 0, 0, .45); }
  `;

  private menubar() {
    return html`<header class="menubar">
      <svg width="26" height="32" viewBox="0 0 26 32" aria-label="Apple menu"><path d="M17.500 1q.3 3-1.500 5t-4 2q-.3-3 1.500-5t4-2zM12.800 9.800c1.300 0 3-1.300 5.500-1.300 2.200 0 4.600 1.200 6 3.300-5.200 3-4.300 10 1.200 12-1.300 3.600-4 7.700-6.800 7.700-2 0-2.700-1.200-5.200-1.200s-3.300 1.200-5.200 1.200C5 31.500.5 24.500.5 18c0-6 3.800-9.300 7.400-9.300 2.200 0 3.900 1.100 4.900 1.100z" fill="currentColor" /></svg>
      <nav>${MENUS.map((m, i) => html`<button class=${classMap({ app: i === 0 })}>${m}</button>`)}</nav>
      <div class="tray">
        <svg class="lock" width="20" height="30" viewBox="0 0 20 30"><rect y="14" width="20" height="15" rx="1.500" fill="currentColor" /><path d="M3 7Q4 1.500 10 1.500T17 8v7" fill="none" stroke="currentColor" stroke-width="2.500" /></svg>
        <svg class="shield" width="32" height="32" viewBox="0 0 32 32"><rect x="1" y="1" width="30" height="30" fill="#5c9c3a" stroke="#2a6a1c" stroke-width="2" /><rect x="4" y="4" width="24" height="24" fill="none" stroke="#85bb66" /><path d="M16 5q4 2 8 2 2 14-8 19Q6 21 8 7q4 0 8-2z" fill="#dcebd8" /><path d="M16 5v22M7 15h18" stroke="#4a9a35" stroke-width="2.500" /></svg>
        <svg class="wifi" width="41" height="30" viewBox="0 0 41 30"><g fill="none" stroke="currentColor" stroke-width="3"><path d="M1.500 10Q20.500-6 39.500 10M8 16.500Q20.500 6 33 16.500M14 23Q20.500 17 27 23" /></g><circle cx="20.500" cy="27" r="3" fill="currentColor" /></svg>
        <svg class="airplay" width="36" height="29" viewBox="0 0 36 29"><path d="M8 20H1.200V1.200h33.600V20H28" fill="none" stroke="currentColor" stroke-width="2.400" /><path d="M18 15l10.500 13.500h-21z" fill="currentColor" /></svg>
        <svg class="battery" width="47" height="25" viewBox="0 0 47 25"><rect x="1.200" y="1.200" width="38" height="22.500" rx="4" fill="none" stroke="currentColor" stroke-width="2.400" /><rect x="4.500" y="4.500" width="24" height="16" fill="currentColor" /><path d="M42 8q4 1 4 4.500T42 17z" fill="currentColor" /></svg>
        <span>Thu 1:39 PM</span>
        <svg class="find" width="30" height="30" viewBox="0 0 30 30"><circle cx="12" cy="12" r="10" fill="none" stroke="currentColor" stroke-width="2.600" /><path d="M19 19l9.500 9.500" stroke="currentColor" stroke-width="3" /></svg>
        <svg class="assistant" width="33" height="33" viewBox="0 0 33 33"><circle cx="16.500" cy="16.500" r="15.500" fill="#1b1a7e" stroke="#150a3c" stroke-width="2" /><path d="M3 20q4-6 8-4 5-6 10-1t9 4q0 11-13 12Q5 30 3 20z" fill="#3f7cf0" /><path d="M3 18q5-5 10 1l-2 5q-6 1-8-6z" fill="#e34fb8" /><path d="M5 22q6-4 12 0t11-2q-5 8-12 4-6 3-11-2z" fill="#eefaff" /></svg>
        <svg width="36" height="21" viewBox="0 0 36 21"><g fill="currentColor"><path d="M0 0h4v3H0zM0 9h4v3H0zM0 18h4v3H0zM8 0h28v3H8zM8 9h22v3H8zM8 18h28v3H8z" /></g></svg>
      </div>
    </header>`;
  }

  private chromeBars() {
    return html`<div class="chrome">
      <div class="titlebar">
        <div class="lights"><button class="light dirty" aria-label="Close"></button><button class="light" aria-label="Minimize"></button><button class="light" aria-label="Zoom"></button></div>
        <div class="quick">
          <button aria-label="New from template"><svg width="32" height="28" viewBox="0 0 32 28"><rect x="1.200" y="1.200" width="29.600" height="25.600" rx="2" fill="none" stroke="currentColor" stroke-width="2.400" /><path d="M9 1v26" stroke="currentColor" stroke-width="2" /><path d="M4 6h2M4 10h2M4 14h2" stroke="currentColor" stroke-width="2" /><path d="M14 5h8l6 6v13H14z" fill="none" stroke="currentColor" stroke-width="2.400" /><path d="M21 4v7h7" fill="none" stroke="currentColor" stroke-width="2" /><path d="M10 2h4v24h-4zM22 2h8v8z" fill="currentColor" /></svg></button>
          <button class="save" aria-label="Save"><svg width="28" height="28" viewBox="0 0 28 28"><path d="M2 1.200h24q.8 0 .8.800v24q0 .8-.8.800H5L1.200 23V2q0-.8.800-.8z" fill="none" stroke="currentColor" stroke-width="2.400" /><path d="M2 14h24v12h-4v-8H9v8H5l-3-3z" fill="currentColor" /><path d="M14 20h4v7h-4z" fill="currentColor" /></svg></button>
          <button class="undo" aria-label="Undo"><svg width="31" height="24" viewBox="0 0 31 24"><path d="M0 5v16h15z" fill="currentColor" /><path d="M8 13Q16 2 24 3.500T28 14Q27 19 22 22" fill="none" stroke="currentColor" stroke-width="3" /></svg>${caret}</button>
          <button class="redo" aria-label="Repeat"><svg width="26" height="26" viewBox="0 0 26 26"><path d="M6 5Q1.500 9 1.500 14a11 11 0 0 0 22 0q0-5-4-8" fill="none" stroke="currentColor" stroke-width="3" /><path d="M13 1h12l-9 9z" fill="currentColor" /></svg></button>
          <button class="more" aria-label="Customize toolbar"><svg width="16" height="16" viewBox="0 0 16 16"><path d="M0 0h16v2H0zM0 6h16l-8 9z" fill="currentColor" /></svg></button>
        </div>
        <span class="doc-title">Workbook1</span>
        <div class="search">
          <svg width="36" height="26" viewBox="0 0 36 26"><circle cx="9" cy="10" r="8" fill="none" stroke="#fff" stroke-width="2" /><path d="M14 16l8 8" stroke="#fff" stroke-width="2.400" /><path d="M26 9l4.500 5L35 9" fill="none" stroke="#fff" stroke-width="2" /></svg>
          <input type="text" placeholder="Search Sheet" aria-label="Search Sheet" />
        </div>
        <button class="smile" aria-label="Feedback"><svg width="34" height="34" viewBox="0 0 34 34"><circle cx="17" cy="17" r="15" fill="none" stroke="currentColor" stroke-width="2.400" /><path d="M13 9v6M21 9v6" stroke="currentColor" stroke-width="2.600" /><path d="M8.500 20q8.500 9 17 0" fill="none" stroke="currentColor" stroke-width="2.400" /></svg>${caret}</button>
      </div>
      <div class="tabs">
        ${TABS.map((t) => html`<button class=${classMap({ tab: true, active: t === "Formulas" })}>${t}</button>`)}
        <button class="share"><svg width="34" height="25" viewBox="0 0 34 25"><ellipse cx="10" cy="6.500" rx="5.500" ry="6.500" fill="currentColor" /><path d="M0 25q0-11 6-11.500h8q6 .5 6 11.500z" fill="currentColor" /><path d="M18 10h16M26 2v16" stroke="currentColor" stroke-width="3.500" /></svg>Share</button>
        <button class="collapse" aria-label="Collapse ribbon"><svg width="20" height="14" viewBox="0 0 20 14"><path d="M2 12l8-8 8 8" fill="none" stroke="currentColor" stroke-width="4" /></svg></button>
      </div>
    </div>`;
  }

  private ribbon() {
    return html`<section class="ribbon">
      <button class="tool first"><span class="art">${fxGlyph("fx-big")}</span><span class="label">Insert<br />Function</span></button>
      <span class="rule a"></span>
      <button class="tool"><span class="art"><svg class="sigma" viewBox="0 0 44 52"><text x="20" y="50" font-size="72" text-anchor="middle" font-family="Liberation Serif, serif" font-weight="700" fill="#58595b">Σ</text></svg>${caret}</span><span class="label">AutoSum</span></button>
      ${BOOKS.map((b) => html`<button class="tool ${b.size}"><span class="art">${book(b.fill, b.edge, b.glyph)}${caret}</span><span class="label">${b.label}</span></button>`)}
      <button class="pressed" aria-label="More Functions">${book("#fb9440", "#e5762a", dotsGlyph)}${caret}</button>
      <span class="rule b"></span>
      <div class="stack names">
        <button><svg width="38" height="23" viewBox="0 0 38 23"><path d="M3 1H30l7 10.500L30 22H3a2 2 0 0 1-2-2V3a2 2 0 0 1 2-2z" fill="#fff" stroke="#777" stroke-width="1.500" /><path d="M7 9h14M7 14h11" stroke="#5b9bd5" stroke-width="2.500" /><circle cx="27" cy="12" r="2.200" fill="none" stroke="#777" stroke-width="1.500" /></svg>Define Name ${caret}</button>
        <button aria-label="Use in Formula"><svg width="38" height="36" viewBox="0 0 38 36"><rect x="8" y="1" width="25" height="32" rx="3" fill="#fff" stroke="#777" stroke-width="1.500" /></svg></button>
      </div>
      <button class="tool"><span class="art"><svg class="book" viewBox="0 0 44 52"><path d="M17 2L40 26L17 50L-6 26Z" fill="#edbd4f" /><path d="M16 32l8 13 16-24" fill="none" stroke="#58595b" stroke-width="7" /></svg>${caret}</span><span class="label">Error Checking</span></button>
      <span class="rule c"></span>
      <button class="tool calc"><span class="art">${calculator("calc-big", true)}${caret}</span><span class="label">Calculation<br />Options</span></button>
      <div class="stack calcs">
        <button>${calculator("calc-small", false)}Calculate Now</button>
        <button><svg width="34" height="34" viewBox="0 0 34 34"><path d="M1 1H32V28H10L6 26L1 28Z" fill="#fff" stroke="#888" /><path d="M1 8H32M1 15H32M9 1V26M17 1V26" stroke="#aaa" /><rect x="15" y="7" width="18" height="26" rx="2" fill="#fff" stroke="#777" /><rect x="18" y="10" width="12" height="4" fill="#4d8fd6" /><path d="M18 18h12M18 22h12M18 26h12M18 30h12" stroke="#aaa" stroke-width="2" stroke-dasharray="2.500 1" /></svg>Calculate Sheet</button>
      </div>
    </section>`;
  }

  private formulaBar() {
    return html`<div class="formula">
        <div class="namebox"><input type="text" aria-label="Name box" .value=${"D16"} />
          <button class="stepper" aria-label="Name list"><svg width="14" height="11" viewBox="0 0 14 11"><path d="M0 11h14L7 0z" fill="currentColor" /></svg><svg width="14" height="11" viewBox="0 0 14 11"><path d="M0 0h14L7 11z" fill="currentColor" /></svg></button></div>
        <button class="cancel" aria-label="Cancel"><svg width="22" height="22" viewBox="0 0 22 22"><path d="M1 1l20 20M21 1L1 21" stroke="#c6c6c6" stroke-width="4" /></svg></button>
        <button class="accept" aria-label="Enter"><svg width="30" height="22" viewBox="0 0 30 22"><path d="M2 11l9 9L28 1" fill="none" stroke="#c6c6c6" stroke-width="4.500" /></svg></button>
        <button aria-label="Insert function">${fxGlyph("fx-small")}</button>
        <input class="entry" type="text" aria-label="Formula" />
        <button aria-label="Expand formula bar"><svg class="caret" width="14" height="11" viewBox="0 0 14 11"><path d="M0 0h14L7 11z" fill="currentColor" /></svg></button>
      </div>
      <div class="split"></div>`;
  }

  private row(n: number) {
    const data = CELLS[n] ?? {};
    return html`<tr>
      <th class=${classMap({ sel: n === 16 })} scope="row">${n}</th>
      ${COLUMNS.map((col) => {
        const text = col === "C" ? data.c : col === "D" ? data.d : undefined;
        const head = !!(data.head && text);
        return html`<td class=${classMap({ head, picked: n === 16 && col === "D" })}>${head ? html`<span class="in">${text}</span>` : text ?? nothing}</td>`;
      })}
    </tr>`;
  }

  private sheet() {
    const rows = Array.from({ length: 28 }, (_, i) => i + 1);
    return html`<div class="sheet">
      <table>
        <colgroup><col class="gutter" />${COLUMNS.map((c) => html`<col class=${c === "T" ? "" : "std"} />`)}</colgroup>
        <thead><tr><th class="corner"><svg class="corner-mark" viewBox="0 0 30 30"><path d="M30 0V30H0Z" fill="#dedede" /></svg></th>
          ${COLUMNS.map((c) => html`<th class=${classMap({ sel: c === "D" })} scope="col">${c === "T" ? "" : c}</th>`)}</tr></thead>
        <tbody>${rows.map((n) => this.row(n))}</tbody>
      </table>
      <div class="hscroll"></div>
    </div>`;
  }

  private footer() {
    return html`<div class="sheettabs">
        <button class="nav" aria-label="Previous sheet"><svg width="15" height="20" viewBox="0 0 15 20"><path d="M15 0v20L0 10z" fill="currentColor" /></svg></button>
        <button class="nav" aria-label="Next sheet"><svg width="15" height="20" viewBox="0 0 15 20"><path d="M0 0v20l15-10z" fill="currentColor" /></svg></button>
        <button class="sheettab">Sheet1</button>
        <button class="add" aria-label="Add sheet"><svg width="20" height="20" viewBox="0 0 20 20"><path d="M10 0v20M0 10h20" stroke="currentColor" stroke-width="3" /></svg></button>
      </div>
      <div class="status">
        <span>Ready</span>
        <div class="views">
          <button class="on" aria-label="Normal view"><svg width="28" height="26" viewBox="0 0 28 26"><path d="M1.500 1.500h25v23h-25zM10 1v24M18 1v24M1 9h26M1 17h26" fill="none" stroke="#fff" stroke-width="2.500" /></svg></button>
          <button class="page" aria-label="Page layout view"><svg width="29" height="26" viewBox="0 0 29 26"><path d="M1.200 1.200h26.600v23.600H1.200zM10 1v14M18 1v14M1 15h17" fill="none" stroke="#6a6a6a" stroke-width="2" /></svg></button>
          <button aria-label="Page break view"><svg width="29" height="26" viewBox="0 0 29 26"><path d="M1.200 1.200h26.600v23.600H1.200zM7 5h15v16H7z" fill="none" stroke="#6a6a6a" stroke-width="2" /><path d="M10 9h9M10 13h9M10 17h9" stroke="#6a6a6a" stroke-width="1.800" /></svg></button>
        </div>
        <div class="zoom">
          <button aria-label="Zoom out"><svg width="16" height="16" viewBox="0 0 16 16"><path d="M0 8h16" stroke="#6a6a6a" stroke-width="4" /></svg></button>
          <input type="range" min="0" max="100" value="50" aria-label="Zoom" />
          <button aria-label="Zoom in"><svg width="16" height="16" viewBox="0 0 16 16"><path d="M0 8h16M8 0v16" stroke="#6a6a6a" stroke-width="4" /></svg></button>
          <output>100%</output>
        </div>
      </div>`;
  }

  private menus() {
    return html`<div class="popup" role="menu">
        ${CATEGORIES.map((c, i) => html`<button class=${classMap({ on: i === 0 })} role="menuitem">${smallBook(c.fill, c.edge, c.glyph)}${c.name}<svg class="go" width="18" height="20" viewBox="0 0 18 20"><path d="M0 0v20l18-10z" fill="currentColor" /></svg></button>`)}
      </div>
      <div class="flyout-shadow"></div>
      <div class="flyout" role="menu">
        <div class="functions">${FUNCTIONS.map((f) => html`<button class=${classMap({ on: f === "MEDIAN" })} role="menuitem">${f}</button>`)}</div>
        <div class="track"><div class="knob"></div></div>
      </div>`;
  }

  private dock() {
    const item = (d: { name: string; running?: boolean; art: unknown }) => html`<button aria-label=${d.name}>
      <svg class="icon" viewBox="0 0 84 84">${d.art}</svg>${d.running ? html`<span class="dot"></span>` : nothing}</button>`;
    return html`<svg class="defs" aria-hidden="true"><defs>
        <linearGradient id="finderBlue" x2="0" y2="1"><stop stop-color="#2bd0fb" /><stop offset="1" stop-color="#1f66e0" /></linearGradient>
        <linearGradient id="storeBlue" x2="0" y2="1"><stop stop-color="#21c5fb" /><stop offset="1" stop-color="#1d62ea" /></linearGradient>
        <linearGradient id="siriDark" x2="1" y2=".6"><stop stop-color="#3a1150" /><stop offset=".45" stop-color="#120a34" /><stop offset="1" stop-color="#1b5560" /></linearGradient>
        <linearGradient id="steel" x2="0" y2="1"><stop stop-color="#cddade" /><stop offset="1" stop-color="#7d7c7b" /></linearGradient>
        <radialGradient id="safariBlue"><stop stop-color="#22c3ea" /><stop offset="1" stop-color="#1b6ee6" /></radialGradient>
        <linearGradient id="qtRing" x2="0" y2="1"><stop stop-color="#9aa0aa" /><stop offset=".6" stop-color="#3a3d42" /><stop offset="1" stop-color="#1c1d20" /></linearGradient>
        <linearGradient id="qtBlue" x2="0" y2="1"><stop stop-color="#1f56df" /><stop offset="1" stop-color="#29d5fb" /></linearGradient>
        <linearGradient id="orb" x2="0" y2="1"><stop stop-color="#dfe2e6" /><stop offset=".6" stop-color="#c9ced5" /><stop offset="1" stop-color="#fff" /></linearGradient>
        <linearGradient id="tunesRing" x2=".3" y2="1"><stop stop-color="#fb5c4c" /><stop offset=".5" stop-color="#c04fd8" /><stop offset="1" stop-color="#2fc2fb" /></linearGradient>
        <linearGradient id="tunesNote" x2="0" y2="1"><stop stop-color="#f9525f" /><stop offset=".6" stop-color="#9a60f0" /><stop offset="1" stop-color="#3f9df8" /></linearGradient>
        <linearGradient id="booksOrange" x2="0" y2="1"><stop stop-color="#fdb62f" /><stop offset="1" stop-color="#e04512" /></linearGradient>
        <linearGradient id="bin" x2="0" y2="1"><stop stop-color="#cfcdd8" /><stop offset=".5" stop-color="#d9d8da" /><stop offset="1" stop-color="#f0eff2" /></linearGradient>
        <clipPath id="disc36"><circle cx="42" cy="42" r="36" /></clipPath><clipPath id="disc41"><circle cx="42" cy="42" r="41" /></clipPath>
      </defs></svg>
      <footer class="dock">${DOCK.map(item)}<span class="line"></span>${DOCK_RIGHT.map(item)}</footer>`;
  }

  private guide() {
    return html`<div class="guide">
      <svg class="arrows" viewBox="0 0 2560 1600">${ARROWS.map(arrow)}</svg>
      ${STEPS.map((s) => html`<span class="step" style=${styleMap({ left: `${s.x}px`, top: `${s.y}px` })}>${s.n}</span>`)}
      ${NOTES.map((n) => html`<div class="note" style=${styleMap({ left: `${n.x}px`, top: `${n.y}px` })}>${n.lines.map((l) => html`<span>${l}</span>`)}</div>`)}
    </div>`;
  }

  render() {
    return html`<div class="desktop">
      <svg class="wallpaper" viewBox="0 0 200 66"><path d="M171 11L191 40L176 66H151L145 57Z" fill="#fff" opacity=".08" /><g fill="none" stroke="#fff" opacity=".08" stroke-width="2"><path d="M145 0l15 26M0 0q8 14 10 0l12 66" /><ellipse cx="125" cy="54" rx="12" ry="20" /></g></svg>
      <div class="shade"></div>
      ${this.menubar()}
      <main class="window">${this.chromeBars()}${this.ribbon()}${this.formulaBar()}${this.sheet()}${this.footer()}</main>
      ${this.dock()}${this.menus()}${this.guide()}
    </div>`;
  }
}
